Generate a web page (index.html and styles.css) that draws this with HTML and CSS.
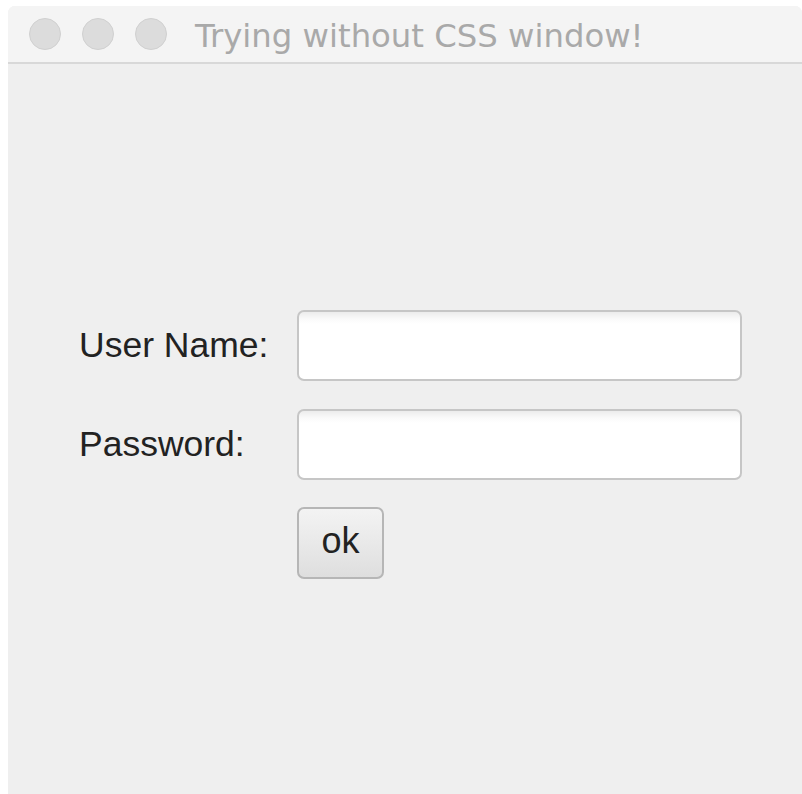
FILE: index.html
```html
<!DOCTYPE html>
<html lang="en">
<head>
<meta charset="utf-8">
<title>Trying without CSS window!</title>
<link rel="stylesheet" href="styles.css">
</head>
<body>
<div class="window">
  <header class="titlebar">
    <div class="lights">
      <span class="light"></span>
      <span class="light"></span>
      <span class="light"></span>
    </div>
    <span class="title">Trying without CSS window!</span>
  </header>
  <main class="content">
    <form class="login">
      <label class="label" for="user">User Name:</label>
      <input class="field" id="user" type="text">
      <label class="label" for="pass">Password:</label>
      <input class="field" id="pass" type="password">
      <span></span>
      <div class="actions"><button class="btn" type="button">ok</button></div>
    </form>
  </main>
</div>
</body>
</html>
```

FILE: styles.css
```css
html, body {
  margin: 0;
  padding: 0;
  background: #ffffff;
  overflow: hidden;
}

.window {
  margin: 6px 0 0 8px;
  height: 788px;
  background: #efefef;
  border-radius: 7px 7px 0 0;
  display: flex;
  flex-direction: column;
  overflow: hidden;
}

.titlebar {
  flex: none;
  background: #f4f4f4;
  border-bottom: 2px solid #d8d8d8;
  display: flex;
  align-items: center;
  box-sizing: border-box;
  height: 58px;
  padding-left: 21px;
}

.lights {
  display: flex;
  gap: 21px;
}

.light {
  width: 30px;
  height: 30px;
  border-radius: 50%;
  background: #dcdcdc;
  border: 1px solid #d0d0d0;
}

.title {
  margin: 5px 0 0 28px;
  font-family: "DejaVu Sans", sans-serif;
  font-size: 32.3px;
  color: #a9a9a9;
  line-height: 1;
}

.content {
  flex: 1;
  padding: 246px 0 0 71px;
}

.login {
  display: grid;
  grid-template-columns: 218px 445px;
  grid-template-rows: 71px 72px 72px;
  row-gap: 27px;
  align-items: center;
}

.label {
  font-family: "Liberation Sans", Arial, sans-serif;
  font-size: 35.5px;
  color: #222222;
}

.field {
  box-sizing: border-box;
  height: 71px;
  width: 445px;
  margin: 0;
  border: 2px solid #c6c6c6;
  border-radius: 7px;
  background: linear-gradient(#ececec 0, #fafafa 7px, #ffffff 12px);
  outline: none;
}

.actions {
  height: 72px;
  display: flex;
  align-items: stretch;
}

.btn {
  box-sizing: border-box;
  width: 87px;
  height: 72px;
  margin: 0;
  padding: 0 0 4px;
  border: 2px solid #b6b6b6;
  border-radius: 7px;
  background: linear-gradient(#f3f3f3, #e9e9e9 50%, #dedede);
  font-family: "Liberation Sans", Arial, sans-serif;
  font-size: 36px;
  color: #222222;
}
```
